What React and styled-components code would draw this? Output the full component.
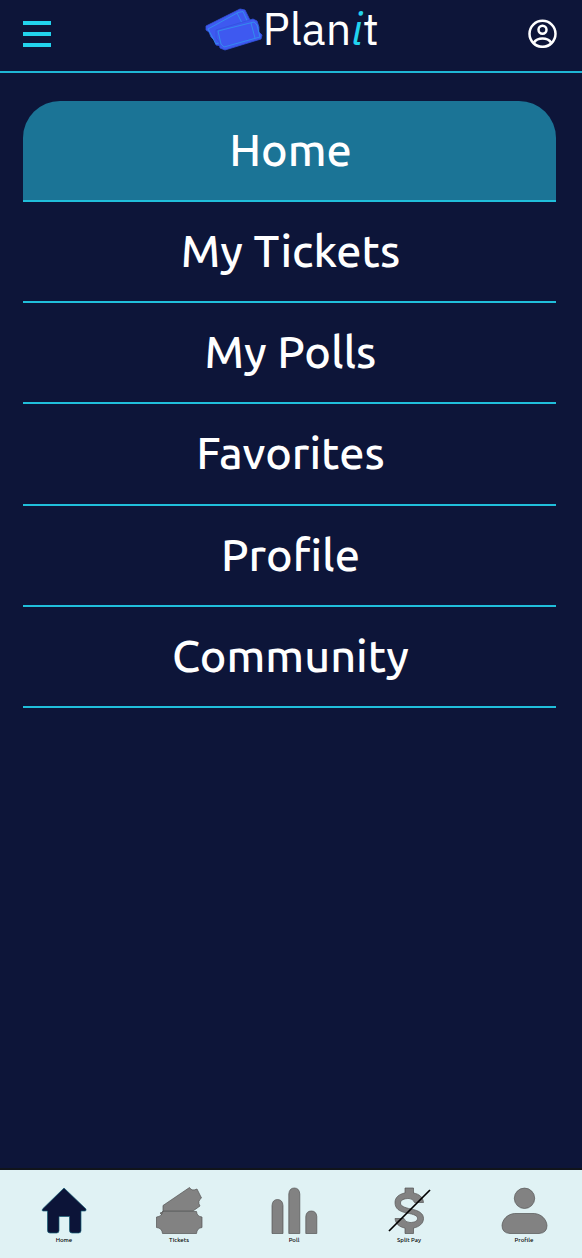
import React from 'react'
import styled, { createGlobalStyle } from 'styled-components'

const GlobalStyle = createGlobalStyle`
  * {
    box-sizing: border-box;
  }

  body {
    margin: 0;
    background: #0d1539;
  }
`

const Page = styled.div`
  display: flex;
  flex-direction: column;
  width: 100%;
  height: 1258px;
  overflow: hidden;
  background: #0d1539;
  font-family: Ubuntu, 'Noto Sans', sans-serif;
`

const Header = styled.header`
  display: flex;
  align-items: flex-start;
  justify-content: space-between;
  height: 73px;
  padding: 0 25px 0 23px;
  border-bottom: 2px solid #1fb6d5;
`

const MenuButton = styled.button`
  display: flex;
  flex-direction: column;
  gap: 7px;
  width: 28px;
  margin-top: 21px;
  padding: 0;
  border: 0;
  background: none;
`

const MenuBar = styled.span`
  height: 4px;
  background: #22d3ee;
`

const Logo = styled.div`
  display: flex;
  height: 60px;
  margin-left: 129px;
`

const LogoTickets = styled.svg`
  width: 58px;
  height: 44px;
  margin-top: 8px;
`

const LogoText = styled.span`
  width: 116px;
  margin-right: 125px;
  color: #fff;
  font-family: 'IBM Plex Sans', 'Noto Sans', sans-serif;
  font-size: 45px;
  line-height: 57px;
  letter-spacing: -0.1px;
  white-space: nowrap;
`

const Accent = styled.em`
  color: #22d3ee;
`

const AccountIcon = styled.svg`
  width: 29px;
  height: 29px;
  margin-top: 19px;
`

const Menu = styled.nav`
  flex: 1;
  padding: 28px 26px 0 23px;
`

const MenuItem = styled.a`
  display: flex;
  align-items: center;
  justify-content: center;
  height: 101.15px;
  padding: 0 0 2px 2px;
  border-bottom: 2px solid #20bedb;
  border-radius: ${({ $active }) => ($active ? '37px 37px 0 0' : '0')};
  background: ${({ $active }) => ($active ? '#1b7496' : 'transparent')};
  color: #fff;
  font-size: 45px;
  font-weight: 500;
`

const TabBar = styled.footer`
  display: flex;
  justify-content: space-between;
  height: 90px;
  padding: 17px 34px 0 40px;
  border-top: 2px solid #10141c;
  background: #e0f2f4;
`

const Tab = styled.a`
  display: flex;
  flex-direction: column;
  align-items: center;
  width: 48px;
  color: #000;
  font-size: 6.1px;
  font-weight: 500;
  line-height: 12px;
  white-space: nowrap;
`

const TabIcon = styled.svg`
  width: 48px;
  height: 47px;
  overflow: visible;
  fill: #828282;
  stroke: #555;
  stroke-width: 0.7;
`

const items = ['Home', 'My Tickets', 'My Polls', 'Favorites', 'Profile', 'Community']

const tabs = [
  {
    label: 'Home',
    icon: (
      <path
        d='M24 1 46 22Q46.500 24 45 24H41V43.500Q41 46 38.500 46H32Q29.500 46 29.500 43.500V29.500H19V43.500Q19 46 16.500 46H10Q7.500 46 7.500 43.500V24H3Q1.500 24 2.500 22Z'
        fill='#0c1438'
        stroke='#155e75'
      />
    )
  },
  {
    label: 'Tickets',
    icon: (
      <>
        <path d='M8 25V18.500L34.500 0.500Q36.500 4.500 42 2L46.500 11Q42 14 45 19L38 24H8L7 28L5 26Z' />
        <path d='M7.500 24.500H41.500Q42 29.500 47 30V40.500Q42 41 41.500 46.500H7.500Q7 41 1.500 40.500V30Q7 29.500 7.500 24.500Z' />
      </>
    )
  },
  {
    label: 'Poll',
    icon: (
      <>
        <path d='M2 46.500V18.500Q2.500 12.500 7.500 12.500T13 18.500V46.500Z' />
        <path d='M18.800 46.500V7Q19.300 1 24.300 1T29.800 7V46.500Z' />
        <path d='M35.800 46.500V29.500Q36.300 24 41.300 24T46.800 29.500V46.500Z' />
      </>
    )
  },
  {
    label: 'Split Pay',
    icon: (
      <>
        <path d='M20 1H28.500V6C34 7 38 10 38.500 15.500H29.500Q28 11.500 24 11.500C19 11.500 15.500 13 15.500 16C15.500 19 19 20.500 26 22C34 23.500 38.500 26.500 38.500 31.500C38.500 36.500 34 40 28.500 41V46.500H20V41C14 40 10.500 36.500 10 31.500H19Q20 35.500 25 35.500C29.500 35.500 32.500 34 32.500 31.500C32.500 28.500 29 27.500 22 26C14 24.500 10 21.500 10 15.500C10 10.500 14 7 20 6Z' />
        <path d='M4 44 45 3' stroke='#000' strokeWidth='1.700' />
      </>
    )
  },
  {
    label: 'Profile',
    icon: (
      <>
        <circle cx='24.500' cy='11.300' r='10.200' />
        <path d='M14.500 26.500H34.500C41 27 46.500 32 47 38.500Q47 46 39 46.500H10Q2 46 2 38.500C2.500 32 8 27 14.500 26.500Z' />
      </>
    )
  }
]

const App = () => (
  <Page>
    <GlobalStyle />
    <Header>
      <MenuButton aria-label='Menu'>
        <MenuBar />
        <MenuBar />
        <MenuBar />
      </MenuButton>
      <Logo>
        <LogoTickets viewBox='0 0 58 44'>
          <g fill='#3e59f0' stroke='#3253dd' strokeWidth='0.800'>
            <path d='M1 18 35 1 40 2 48 18 47 23 16 38 11 37 9 32 6 29 4 24 1 22Z' />
            <path d='M3 21 33 4.500 38 3.500 44 17 16 34 11 36Z' fill='none' stroke='#3198ee' />
            <path d='M32 5 39 19' stroke='#3198ee' />
            <path d='M11 22 48 11 52 13 54 19 54 24 57 27 56 31 20 42 15 40 14 34 11 30Z' />
            <path d='M13 23 49 14 52 17 55 29 19 39 16 36Z' fill='none' stroke='#3198ee' />
            <path d='M46 15 50 30' stroke='#3198ee' />
          </g>
        </LogoTickets>
        <LogoText>
          Plan<Accent>i</Accent>t
        </LogoText>
      </Logo>
      <AccountIcon viewBox='0 0 29 29' fill='none' stroke='#fff' strokeWidth='2.500'>
        <circle cx='14.500' cy='14.800' r='13' />
        <circle cx='14.500' cy='10.700' r='4' />
        <path d='M6 23.500Q8.500 19.500 14.500 19.500T23 23.500' />
      </AccountIcon>
    </Header>
    <Menu>
      {items.map((label, index) => (
        <MenuItem key={label} $active={index === 0}>
          {label}
        </MenuItem>
      ))}
    </Menu>
    <TabBar>
      {tabs.map(({ label, icon }) => (
        <Tab key={label}>
          <TabIcon viewBox='0 0 48 47'>{icon}</TabIcon>
          {label}
        </Tab>
      ))}
    </TabBar>
  </Page>
)

export default App
